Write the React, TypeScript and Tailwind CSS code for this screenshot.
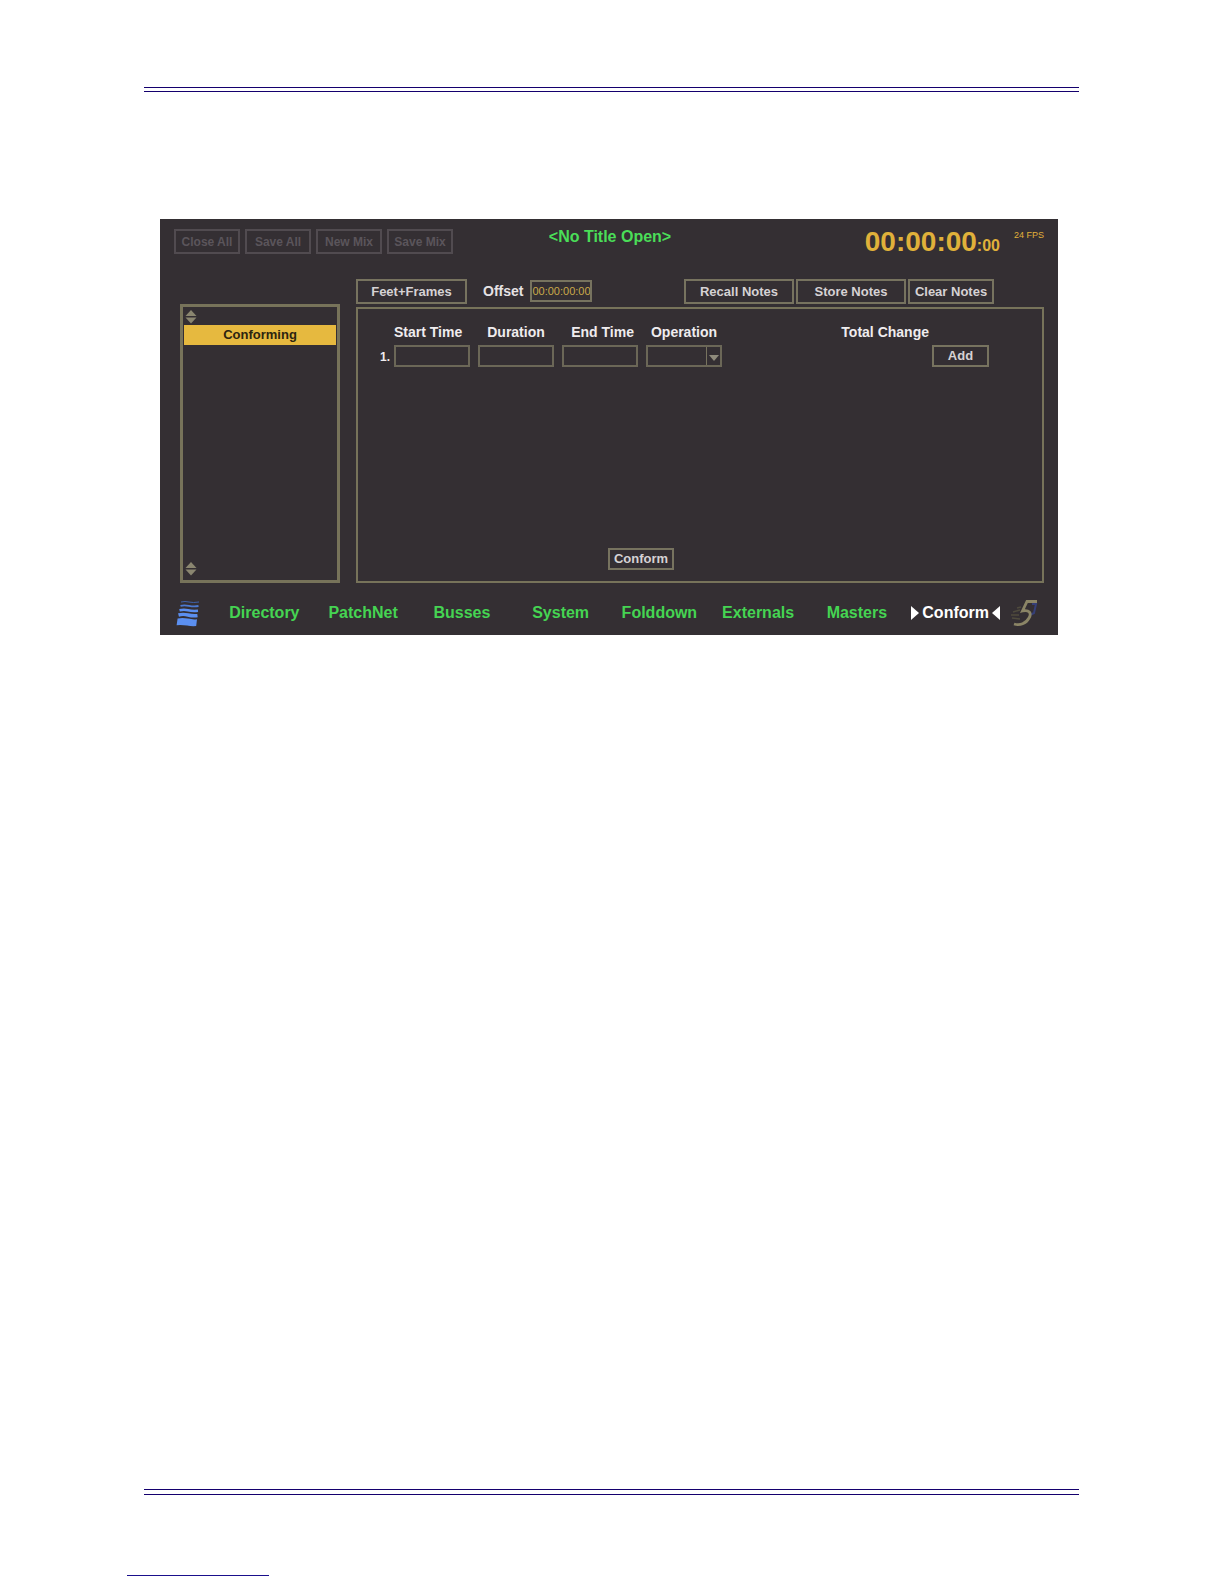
import clsx from "clsx";
import type { ReactNode } from "react";

const navItems = [
  "Directory",
  "PatchNet",
  "Busses",
  "System",
  "Folddown",
  "Externals",
  "Masters",
  "Conform",
];

const fileActions = ["Close All", "Save All", "New Mix", "Save Mix"];

const PanelButton = ({
  children,
  className,
}: {
  children: ReactNode;
  className?: string;
}) => (
  <button
    className={clsx(
      "border-2 border-[#77735f] text-[13px] leading-4 font-bold whitespace-nowrap text-[#d6d2d4]",
      className
    )}
  >
    {children}
  </button>
);

const ScrollArrows = () => (
  <svg viewBox="0 0 12 14" className="h-[14px] w-3" fill="#8a8670">
    <path d="M6 0 L11.500 6 H.5 Z" />
    <path d="M.5 7.500 H11.500 L6 13.500 Z" />
  </svg>
);

const WavesIcon = () => (
  <svg viewBox="0 0 24 27" className="h-[27px] w-6" fill="none" stroke="#5b8ff0">
    <path d="M5 2 Q9 1 13 2 T23 2" strokeWidth="1" stroke="#3f62ab" />
    <path d="M4.500 5.800 Q8 4.800 13 5.800 T22.500 6" strokeWidth="1.800" stroke="#4c7ad2" />
    <path d="M3.500 10.300 Q8 9.300 12 10.300 T22 10.800" strokeWidth="2.600" />
    <path d="M2.500 15 Q7 13.800 12 15 T21.500 15.600" strokeWidth="3.400" />
    <path
      d="M1.600 18.400 Q7 17.400 12 18.600 T21 19.200 L20.200 26 Q16 26.400 11 25.600 T.6 25.200 Z"
      fill="#5b8ff0"
      stroke="none"
    />
  </svg>
);

const SeriesLogo = () => (
  <svg viewBox="0 0 28 28" className="h-7 w-7" fill="none">
    <path d="M22 5 H26 L24 14 L20 16" stroke="#353f78" strokeWidth="2" />
    <path
      d="M3 13 L10 11 M1 16 L9 16 M2 19 L10 20 M7 9 L11 8"
      stroke="#4f4b3d"
      strokeWidth="1.500"
    />
    <path
      d="M27 2.500 H17 L12.500 12 C19 10.500 22 14 19 19 C16 24.500 10 27 4 25"
      stroke="#8b8566"
      strokeWidth="2.800"
    />
  </svg>
);

const TimeField = ({ label }: { label: string }) => (
  <input
    aria-label={label}
    className="h-[22px] w-full min-w-0 border-2 border-[#6b6757] px-1 text-xs text-white"
  />
);

const Console = () => (
  <section className="mt-[127px] mr-[21px] ml-4 flex flex-col bg-[#342f33]">
    <header className="grid grid-cols-[1fr_auto_1fr] items-start pt-[10px] pr-[14px] pl-4">
      <div className="-ml-0.5 flex gap-[5px]">
        {fileActions.map((action) => (
          <button
            key={action}
            className="h-[25px] w-[66px] border-2 border-[#514b50] text-xs font-bold whitespace-nowrap text-[#5b555b]"
          >
            {action}
          </button>
        ))}
      </div>
      <h1 className="text-base leading-4 font-bold text-[#4ade58]">
        &lt;No Title Open&gt;
      </h1>
      <div className="flex items-start justify-end font-bold text-[#e0b13a]">
        <p className="h-[25px] text-[28px] leading-[26px]">
          00:00:00<span className="text-base">:00</span>
        </p>
        <span className="ml-[14px] text-[9px] leading-3 font-normal">
          24 FPS
        </span>
      </div>
    </header>

    <div className="mt-[25px] flex gap-4 pr-[14px] pl-5">
      {/* Note list */}
      <aside className="mt-[25px] flex w-[160px] shrink-0 flex-col border-3 border-[#77735a] px-px">
        <div className="px-px pt-[3px] pb-px">
          <ScrollArrows />
        </div>
        <button className="h-5 w-full bg-[#e6b93f] text-[13px] leading-5 font-bold text-[#2c2410]">
          Conforming
        </button>
        <div className="mt-auto px-px pb-1">
          <ScrollArrows />
        </div>
      </aside>

      <div className="flex min-w-0 flex-1 flex-col">
        <div className="flex items-start pr-[50px]">
          <PanelButton className="h-[25px] w-[111px]">Feet+Frames</PanelButton>
          <label
            htmlFor="offset"
            className="ml-4 text-sm leading-6 font-bold text-[#e6e2e4]"
          >
            Offset
          </label>
          <input
            id="offset"
            defaultValue="00:00:00:00"
            className="mt-px ml-[7px] h-[22px] w-[62px] border-2 border-[#77735f] text-center text-[11px] text-[#c9a94a]"
          />
          <div className="ml-auto flex gap-0.5">
            <PanelButton className="h-[25px] w-[110px]">Recall Notes</PanelButton>
            <PanelButton className="h-[25px] w-[110px]">Store Notes</PanelButton>
            <PanelButton className="h-[25px] w-[86px]">Clear Notes</PanelButton>
          </div>
        </div>

        {/* Conform list */}
        <form
          className="mt-[3px] flex min-h-[276px] flex-col border-2 border-[#77735a] pt-[13px] pb-[11px]"
          onSubmit={(e) => e.preventDefault()}
        >
          <div className="grid grid-cols-[20px_76px_76px_76px_76px_1fr_57px] gap-x-2 gap-y-[3px] pr-[53px] pl-2 text-sm leading-5 font-bold text-[#efecee]">
            <span />
            <span className="whitespace-nowrap">Start Time</span>
            <span className="text-center">Duration</span>
            <span className="pr-1 text-right">End Time</span>
            <span className="text-center">Operation</span>
            <span className="col-span-2 pr-[60px] text-right">Total Change</span>

            <span className="-mr-1 text-right text-xs leading-6">1.</span>
            <TimeField label="Start Time" />
            <TimeField label="Duration" />
            <TimeField label="End Time" />
            <div className="relative">
              <select
                aria-label="Operation"
                defaultValue=""
                className="h-[22px] w-full appearance-none border-2 border-[#6b6757] pl-1 text-xs text-white"
              >
                <option value="" />
              </select>
              <span className="pointer-events-none absolute top-0.5 right-0.5 flex h-[18px] w-[14px] items-center justify-center border-l border-[#77735f]">
                <svg viewBox="0 0 10 6" className="mt-1 h-[6px] w-[10px]">
                  <path d="M0 0 H10 L5 6 Z" fill="#8f8b7c" />
                </svg>
              </span>
            </div>
            <PanelButton className="col-start-7 h-[22px]">Add</PanelButton>
          </div>
          <PanelButton className="mt-auto ml-[250px] h-[22px] w-[66px] self-start">
            Conform
          </PanelButton>
        </form>
      </div>
    </div>

    <nav className="flex h-[52px] items-center pt-2 pr-5 pl-4">
      <WavesIcon />
      <div className="ml-[15px] grid flex-1 grid-cols-8">
        {navItems.map((item) => {
          const active = item === "Conform";

          return (
            <a
              key={item}
              href="#"
              className={clsx(
                "flex items-center justify-center gap-[3px] text-base leading-5 font-bold",
                active ? "text-white" : "text-[#45d452]"
              )}
            >
              {active && (
                <svg viewBox="0 0 8 16" className="h-4 w-2" fill="currentColor">
                  <path d="M0 1 L8 8 L0 15 Z" />
                </svg>
              )}
              {item}
              {active && (
                <svg viewBox="0 0 8 16" className="h-4 w-2" fill="currentColor">
                  <path d="M8 1 L0 8 L8 15 Z" />
                </svg>
              )}
            </a>
          );
        })}
      </div>
      <div className="ml-[5px]">
        <SeriesLogo />
      </div>
    </nav>
  </section>
);

const App = () => {
  return (
    <div className="flex min-h-screen flex-col bg-white pt-[87px] pr-[145px] pb-2 pl-36 font-['Liberation_Sans',sans-serif]">
      <div className="h-[5px] border-y border-[#14006e]" />
      <Console />
      <footer className="mt-auto">
        <div className="h-[6px] border-y border-[#14006e]" />
        <div className="mt-20 -ml-[17px] h-px w-[142px] bg-[#1a0f8c]" />
      </footer>
    </div>
  );
};

export default App;
